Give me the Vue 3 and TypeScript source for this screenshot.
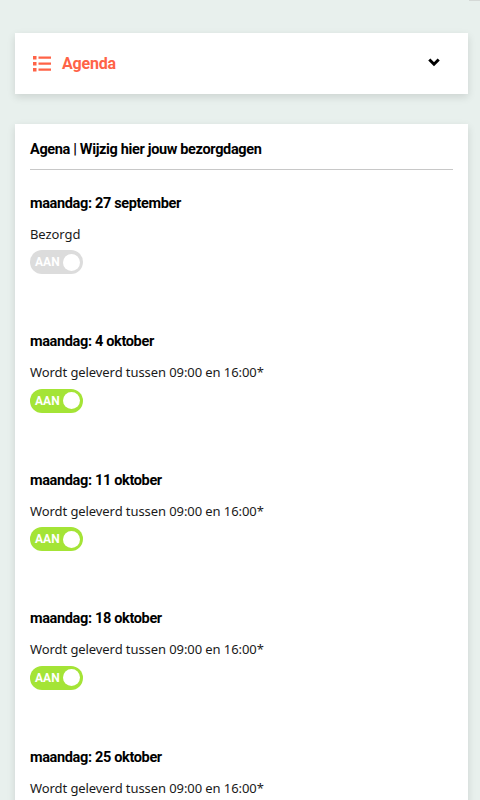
<template>
  <div class="page">
    <div class="top-edge"></div>
    <section class="card accordion">
      <svg class="list-icon" width="18" height="16" viewBox="0 0 18 16" aria-hidden="true">
        <path d="M0 0h3.500v3.500H0zM0 6h3.500v3.500H0zM0 12h3.500v3.500H0z" />
        <path d="M5.500 .5H18v2.200H5.500zM5.500 6.500H18v2.200H5.500zM5.500 12.500H18v2.200H5.500z" />
      </svg>
      <span class="accordion__title">Agenda</span>
      <svg class="chevron" width="12" height="9" viewBox="0 0 12 9" aria-hidden="true">
        <path d="M1.300 1.500 6 6.200l4.700-4.700" />
      </svg>
    </section>

    <section class="card agenda">
      <h2 class="agenda__title">Agena | Wijzig hier jouw bezorgdagen</h2>
      <div class="day" v-for="day in days" :key="day.date">
        <h3 class="day__date">{{ day.date }}</h3>
        <p class="day__info">{{ day.info }}</p>
        <div class="toggle" :class="{ 'toggle--off': day.delivered }">
          <span class="toggle__label">AAN</span>
          <span class="toggle__knob"></span>
        </div>
      </div>
    </section>
  </div>
</template>

<script setup lang="ts">
type Day = { date: string; info: string; delivered?: boolean };

const slot = "Wordt geleverd tussen 09:00 en 16:00*";

const days: Day[] = [
  { date: "maandag: 27 september", info: "Bezorgd", delivered: true },
  { date: "maandag: 4 oktober", info: slot },
  { date: "maandag: 11 oktober", info: slot },
  { date: "maandag: 18 oktober", info: slot },
  { date: "maandag: 25 oktober", info: slot },
];
</script>

<style>
html,
body {
  margin: 0;
  background: #e8f0ed;
}
</style>

<style scoped>
.page {
  height: 800px;
  overflow: hidden;
  padding: 0 12px 0 15px;
  box-sizing: border-box;
  font-family: "Noto Sans", sans-serif;
  color: #000;
}

.top-edge {
  width: 11px;
  height: 1px;
  margin: 0 -12px 32px auto;
  background: #d5d9d7;
}

.card {
  background: #fff;
  box-shadow: 0 3px 8px rgba(0, 0, 0, 0.12);
}

.accordion {
  display: flex;
  align-items: center;
  height: 61px;
  padding: 0 28px 0 18px;
  margin-bottom: 30px;
}

.list-icon {
  fill: #ff6347;
  margin-right: 11px;
}

.accordion__title {
  color: #ff6347;
  font-family: Roboto, sans-serif;
  font-size: 16px;
  font-weight: 700;
  letter-spacing: -0.2px;
  flex: 1;
}

.chevron {
  fill: none;
  stroke: #000;
  stroke-width: 3;
  margin-bottom: 2px;
}

.agenda {
  padding: 16px 15px 0;
}

.agenda__title {
  margin: 0;
  padding-bottom: 8.750px;
  border-bottom: 1px solid #c8c8c8;
  font-family: Roboto, sans-serif;
  font-size: 14.500px;
  line-height: 20px;
  letter-spacing: -0.35px;
  font-weight: 700;
}

.day {
  height: 138.500px;
  padding-top: 24px;
  box-sizing: border-box;
}

.day__date {
  margin: 0;
  font-family: Roboto, sans-serif;
  font-size: 14.500px;
  line-height: 20px;
  letter-spacing: -0.35px;
  font-weight: 700;
}

.day__info {
  margin: 10px 0 6.500px;
  font-size: 13px;
  line-height: 20px;
  letter-spacing: -0.08px;
  color: #1a1a1a;
}

.toggle {
  display: flex;
  align-items: center;
  justify-content: space-between;
  width: 53px;
  height: 24px;
  padding: 0 3px 0 5px;
  box-sizing: border-box;
  border-radius: 12px;
  background: #a4e436;
}

.toggle--off {
  background: #dcdcdc;
}

.toggle__label {
  color: #fff;
  font-family: Roboto, sans-serif;
  font-size: 12px;
  font-weight: 700;
}

.toggle__knob {
  width: 17px;
  height: 17px;
  border-radius: 50%;
  background: #fff;
}
</style>
